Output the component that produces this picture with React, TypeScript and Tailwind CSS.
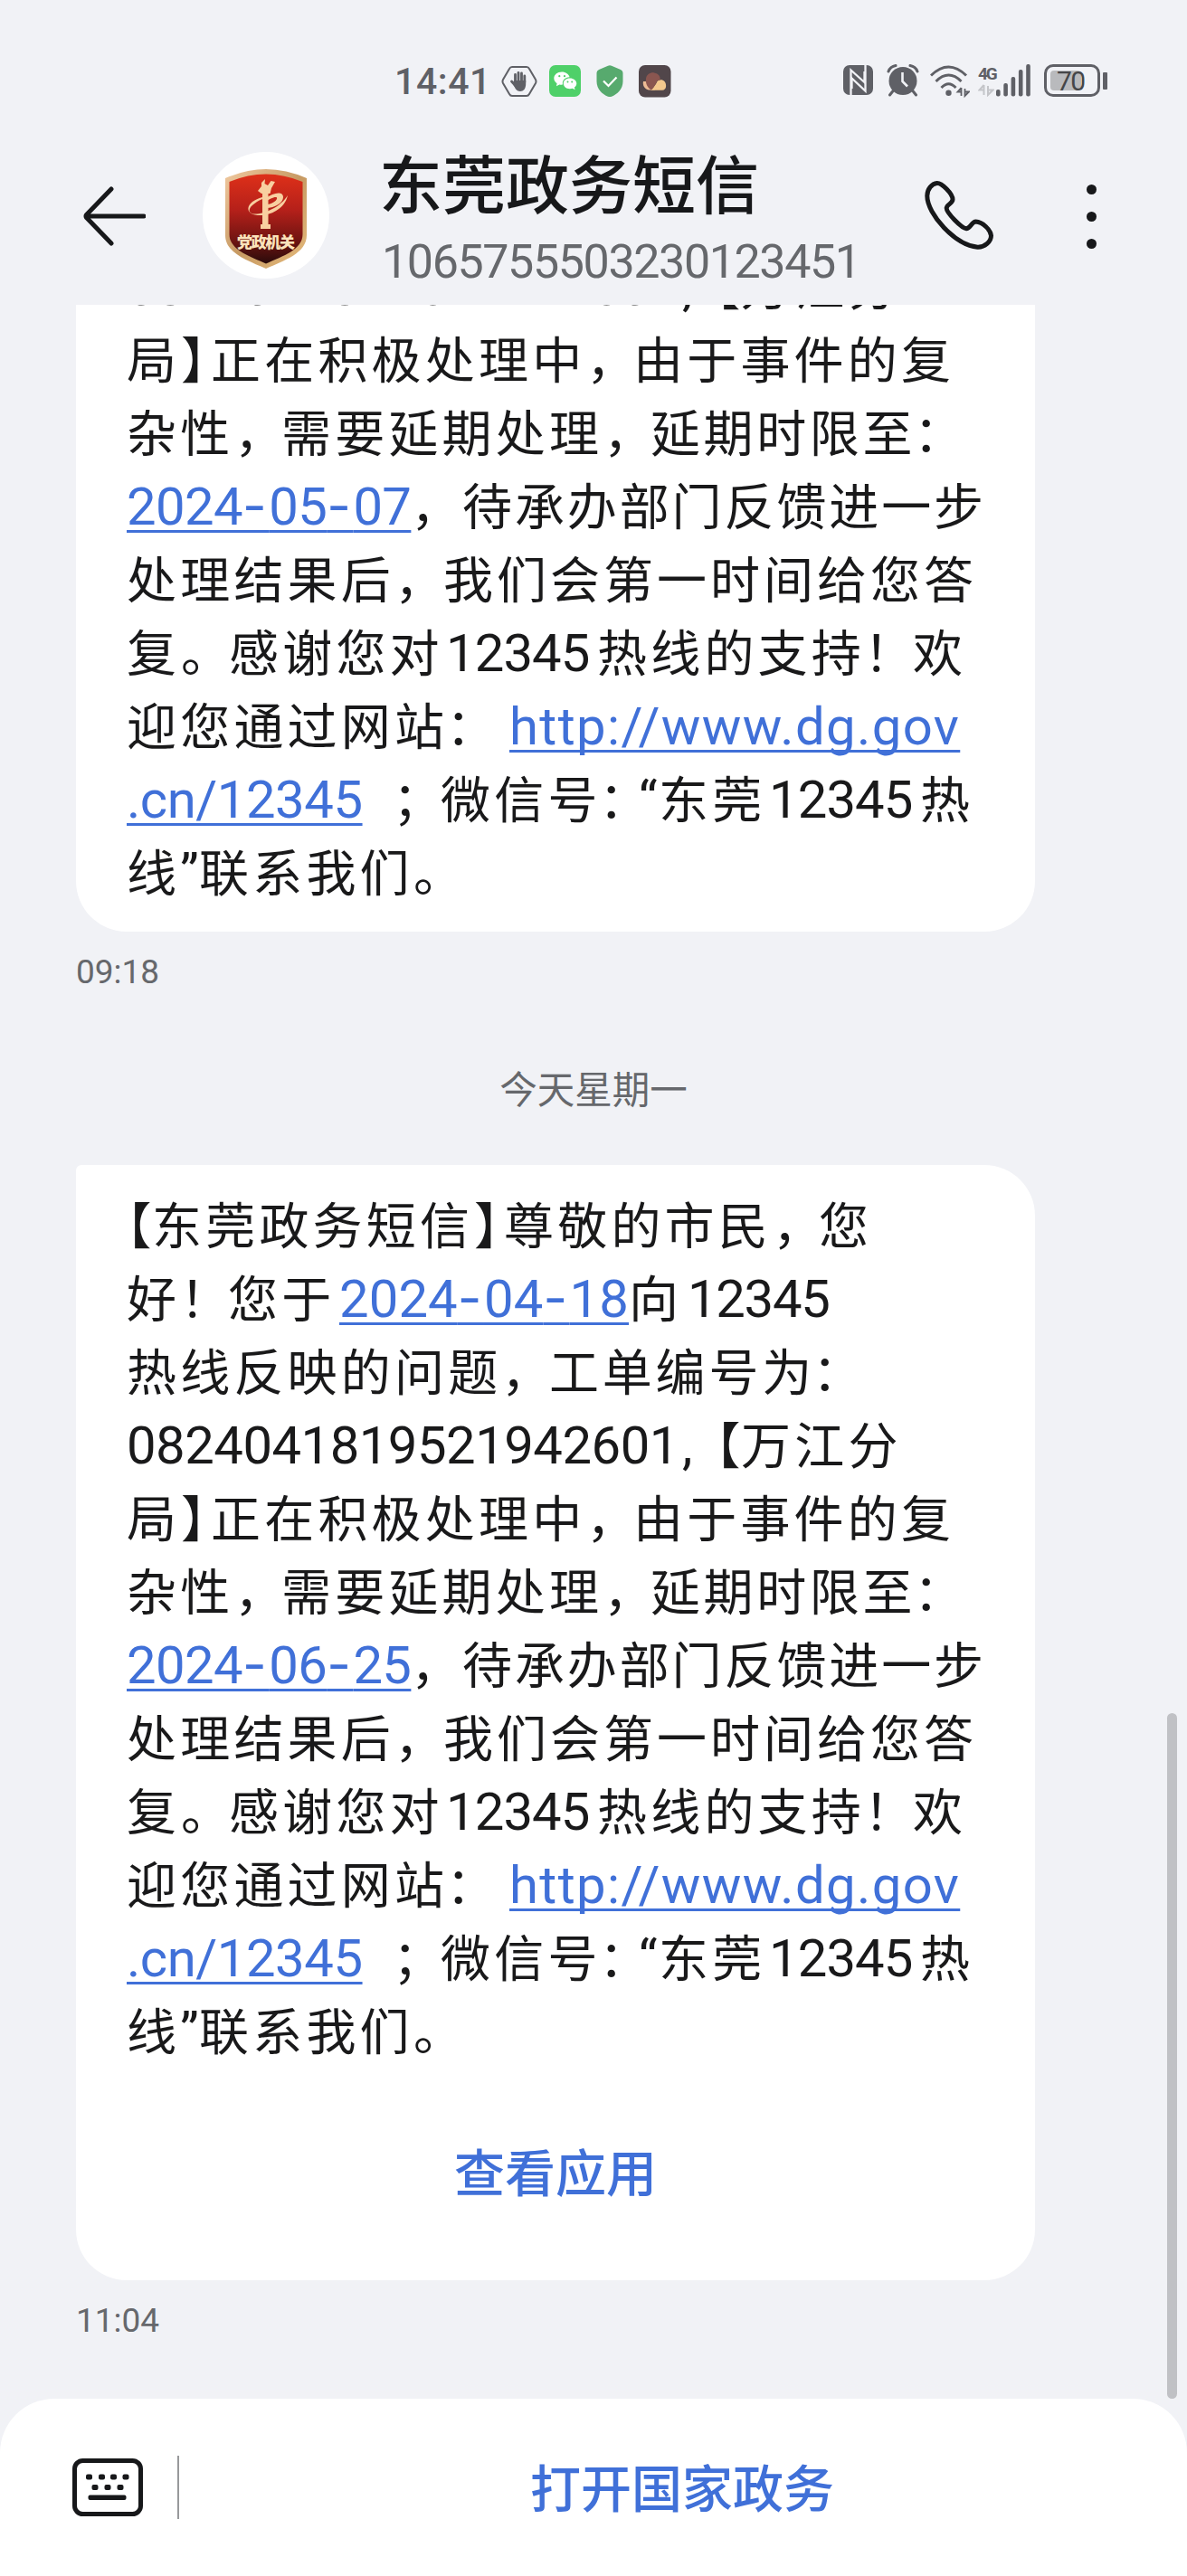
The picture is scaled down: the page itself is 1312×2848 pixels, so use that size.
import { Fragment } from 'react';

type Run = [text: string, className: string];

const NUM = "font-['Roboto','Noto_Sans_CJK_SC',sans-serif] text-[58px]";
const DIGITS = `${NUM} tracking-[-0.9px]`;
const LINK = `${NUM} text-[#4070d8] underline decoration-[2.5px] underline-offset-[6px] [text-decoration-skip-ink:none]`;
const BRACKET = "[font-feature-settings:'halt']";
const PUNCT = 'tracking-[-3px]';

const closingLines = (date: string): Run[][] => [
  [
    ['局', 'w-[60px]'],
    ['】', `w-[33px] ${BRACKET}`],
    ['正在积极处理中', 'w-[415px]'],
    ['，', `w-[52px] ${PUNCT}`],
    ['由于事件的复', ''],
  ],
  [
    ['杂性', 'w-[119px]'],
    ['，', `w-[52px] ${PUNCT}`],
    ['需要延期处理', 'w-[356px]'],
    ['，', `w-[52px] ${PUNCT}`],
    ['延期时限至', 'w-[291px] tracking-[3.6px]'],
    ['：', ''],
  ],
  [
    [date, `w-[314px] tracking-[-0.6px] ${LINK}`],
    ['，', `w-[57px] ${PUNCT}`],
    ['待承办部门反馈进一步', 'tracking-[2.9px]'],
  ],
  [
    ['处理结果后', 'w-[296px]'],
    ['，', `w-[54px] ${PUNCT}`],
    ['我们会第一时间给您答', 'tracking-[4px]'],
  ],
  [
    ['复', 'w-[60px]'],
    ['。', `w-[53px] ${PUNCT}`],
    ['感谢您对', 'w-[240px]'],
    ['12345', `w-[167px] ${DIGITS}`],
    ['热线的支持', 'w-[295px]'],
    ['！', `w-[54px] ${PUNCT}`],
    ['欢', ''],
  ],
  [
    ['迎您通过网站', 'w-[353px]'],
    ['：', 'w-[70px]'],
    ['http://www.dg.gov', `tracking-[1.4px] ${LINK}`],
  ],
  [
    ['.cn/12345', `w-[294px] tracking-[-0.45px] ${LINK}`],
    ['；', `w-[53px] ${PUNCT}`],
    ['微信号', 'w-[175px]'],
    ['：', 'w-[44px] tracking-[-12px]'],
    ['“', `w-[22px] ${DIGITS}`],
    ['东莞', 'w-[122px]'],
    ['12345', `w-[167px] ${DIGITS}`],
    ['热', ''],
  ],
  [
    ['线', 'w-[59px]'],
    ['”', `w-[21px] ${DIGITS}`],
    ['联系我们', 'w-[237px]'],
    ['。', ''],
  ],
];

const ORDER_LINE: Run[] = [
  ['0824041819521942601', `w-[608px] tracking-[-0.5px] ${NUM}`],
  [',', `w-[43px] pl-1.5 ${DIGITS}`],
  ['【', `w-[28px] ${BRACKET}`],
  ['万江分', ''],
];

const OPENING_LINES: Run[][] = [
  [
    ['【', `w-[28px] ${BRACKET}`],
    ['东莞政务短信', 'w-[356px]'],
    ['】', `w-[33px] ${BRACKET}`],
    ['尊敬的市民', 'w-[297px]'],
    ['，', `w-[51px] ${PUNCT}`],
    ['您', ''],
  ],
  [
    ['好', 'w-[59px]'],
    ['！', `w-[53px] ${PUNCT}`],
    ['您于', 'w-[123px]'],
    ['2024-04-18', `w-[320px] tracking-[0.1px] ${LINK}`],
    ['向', 'w-[65px]'],
    ['12345', `tracking-[-1.3px] ${NUM}`],
  ],
  [
    ['热线反映的问题', 'w-[414px]'],
    ['，', `w-[53px] ${PUNCT}`],
    ['工单编号为', 'w-[291px] tracking-[3.8px]'],
    ['：', ''],
  ],
  ORDER_LINE,
];

// Roboto's hyphen is too short for dates, so take that one glyph from Inter
function RunText({ text }: { text: string }) {
  return text.split('-').map((part, i) => (
    <Fragment key={i}>
      {i > 0 && <span className="font-['Inter',sans-serif] tracking-[2.5px]">-</span>}
      {part}
    </Fragment>
  ));
}

function MessageText({ lines }: { lines: Run[][] }) {
  return (
    <div className="text-[55px] tracking-[4.2px] text-[#19191a]">
      {lines.map((runs, i) => (
        <p key={i} className="flex h-[81px] items-baseline leading-[81px] whitespace-nowrap">
          {runs.map(([text, className], j) => (
            <span key={j} className={`shrink-0 ${className}`}>
              <RunText text={text} />
            </span>
          ))}
        </p>
      ))}
    </div>
  );
}

function StatusBar() {
  return (
    <div className="flex h-[148px] items-start pt-[71px] pr-[88px] pl-[436px] text-[#5f6066]">
      <span className="w-[118px] font-['Roboto',sans-serif] text-[41px] leading-[38px] font-medium tracking-[0.6px] whitespace-nowrap">
        14:41
      </span>
      <svg className="h-[38px] w-[40px]" viewBox="0 0 40 38" fill="none">
        <path
          d="M12 3H28Q30 3 31 5L38 17Q39 19 38 21L31 33Q30 35 28 35H12Q10 35 9 33L2 21Q1 19 2 17L9 5Q10 3 12 3Z"
          stroke="currentColor"
          strokeWidth="2"
        />
        <g stroke="currentColor" strokeWidth="2.8" strokeLinecap="round">
          <path d="M15.5 20V11.5M19 19V9.5M22.5 19V10M25.8 20V13M16 24L11.5 19" />
        </g>
        <path d="M14 18H27.2V22C27.2 27 24.5 30 21 30C17 30 15.5 27 13 22Z" fill="currentColor" />
      </svg>
      <svg className="ml-[13px] h-[38px] w-[36px]" viewBox="0 0 36 38">
        <rect y="1" width="35" height="35" rx="7" fill="#4fd069" />
        <path d="M14 8.5C9 8.5 5.3 11.7 5.3 15.6C5.3 18 6.6 20 8.6 21.3L8 24.3L11.4 22.4C13 22.8 14 22.7 15 22.6C14 18 17.5 14.4 22.6 14.3C21.7 11 18.3 8.5 14 8.5Z" fill="#fff" />
        <path d="M22.8 15.5C18.7 15.5 15.8 18.2 15.8 21.3C15.8 24.5 18.7 27.2 22.8 27.2C24 27.2 25 27 25.8 26.7L28.6 28.2L27.9 25.6C29.4 24.5 30.3 23 30.3 21.3C30.3 18.2 27 15.5 22.8 15.5Z" fill="#fff" />
        <g fill="#4fd069">
          <circle cx="11.3" cy="13.2" r="1.1" />
          <circle cx="17" cy="13.2" r="1.1" />
          <circle cx="20.5" cy="19.5" r="1" />
          <circle cx="25.2" cy="19.5" r="1" />
        </g>
      </svg>
      <svg className="ml-[15px] h-[38px] w-[32px]" viewBox="0 0 32 38">
        <path d="M14 1.7Q16 .8 18 1.7L28 6Q30.5 7 30.5 9.5V19C30.5 27.5 24 33.5 18 35.7Q16 36.4 14 35.7C8 33.5 1.5 27.5 1.5 19V9.5Q1.5 7 4 6Z" fill="#57aa6e" />
        <path d="M9 18.5L14.5 24L23.5 14.5" stroke="#fff" strokeWidth="2.2" fill="none" />
      </svg>
      <svg className="ml-[16px] h-[38px] w-[36px]" viewBox="0 0 36 38">
        <rect y="1" width="35.5" height="35.5" rx="7" fill="#51464a" />
        <path d="M5 19C4 23 6.5 28 11 28.5H18L8 19Z" fill="#edbc95" />
        <path d="M13 28.7C16 27 17 24 19.5 21C20 17.5 25.5 15.5 28.5 19C31 22 31 28.7 26 28.7Z" fill="#f4c98e" />
        <path d="M8 16C8.5 11.5 12.5 9 17 9.4C22 10 24.5 14 23.4 17.5C20 17.8 19.5 20 18.5 22.5C16.5 25.5 15.5 27.5 14 28.5C9.5 26 7.3 21 8 16Z" fill="#8a5650" />
      </svg>

      <svg className="ml-auto h-[38px] w-[34px]" viewBox="0 0 34 38">
        <rect y="1" width="33" height="33" rx="7" fill="currentColor" />
        <path d="M8.5 34V6.5L23.5 20V8" fill="none" stroke="#f1f2f6" strokeWidth="2.3" />
        <path d="M24.5 1V29.5L9.5 15.5V27" fill="none" stroke="#f1f2f6" strokeWidth="2.3" />
        <path d="M10.2 10.5L22.8 22V26L10.2 14.2Z" fill="currentColor" />
      </svg>
      <svg className="ml-[14px] h-[38px] w-[36px]" viewBox="0 0 36 38" fill="none">
        <circle cx="18" cy="18.5" r="15.5" fill="currentColor" />
        <path d="M2 8Q4 2.5 10 1.5M34 8Q32 2.5 26 1.5M7.5 29L3.5 34M28.5 29L32.5 34" stroke="currentColor" strokeWidth="3" strokeLinecap="round" />
        <path d="M17.5 9V19L23 24.5" stroke="#f1f2f6" strokeWidth="2.6" />
      </svg>
      <svg className="ml-[12px] h-[38px] w-[44px]" viewBox="0 0 44 38" fill="none">
        <g stroke="currentColor" strokeWidth="3">
          <path d="M1 12.5Q20.5-6.5 40 12.5" />
          <path d="M6.5 19Q20.5 5 34.5 19" />
          <path d="M12.5 26Q20.5 17.5 28.5 26" />
        </g>
        <circle cx="20.5" cy="31.8" r="3.2" fill="currentColor" />
        <path d="M34.5 26V35M34.5 26L30.5 30.5H34.5M38.5 27V35L43 30.5H38.5" stroke="currentColor" strokeWidth="1.8" />
      </svg>
      <div className="ml-[9px] flex w-[60px] items-end">
        <div className="flex w-[20px] flex-col">
          <span className="font-['Roboto',sans-serif] text-[19px] leading-[19px] font-bold tracking-[-2.2px]">4G</span>
          <svg className="h-[16px] w-[18px]" viewBox="0 0 18 16" fill="none" stroke="#c4c5c9" strokeWidth="2">
            <path d="M6.5 3V14M6.5 3L1.5 8.5H6.5M11 4V14L16.5 8.5H11" />
          </svg>
        </div>
        <svg className="h-[36px] w-[40px]" viewBox="0 0 40 36" fill="currentColor">
          <rect x="0" y="28" width="4.6" height="7.5" rx="2" />
          <rect x="8.3" y="21" width="4.6" height="14.5" rx="2" />
          <rect x="16.6" y="14" width="4.6" height="21.5" rx="2" />
          <rect x="24.9" y="6" width="4.6" height="29.5" rx="2" />
          <rect x="33.2" y="0" width="4.6" height="35.5" rx="2" />
        </svg>
      </div>
      <div className="ml-[13px] flex items-center">
        <div className="h-[36px] w-[62px] rounded-[10px] border-[3px] border-current p-[4px]">
          <div className="h-[22px] w-[34px] rounded-[4px] bg-[#b9babd] pl-[7px] font-['Roboto',sans-serif] text-[30px] leading-[23px] tracking-[-1.5px] text-[#454649]">
            70
          </div>
        </div>
        <div className="ml-[3px] h-[19px] w-[5px] rounded-[1px] bg-current" />
      </div>
    </div>
  );
}

function Emblem() {
  return (
    <div className="ml-[63px] flex size-[140px] items-center justify-center rounded-full bg-white">
      <svg className="mt-[8px] h-[112px] w-[92px]" viewBox="0 0 92 112">
        <defs>
          <linearGradient id="crest" x1="0" y1="0" x2="0" y2="1">
            <stop offset="0" stopColor="#de3019" />
            <stop offset=".4" stopColor="#b5201a" />
            <stop offset=".72" stopColor="#741512" />
            <stop offset="1" stopColor="#2a0b0b" />
          </linearGradient>
          <linearGradient id="rim" x1="0" y1="0" x2="1" y2="1">
            <stop offset="0" stopColor="#f0c9a0" />
            <stop offset=".5" stopColor="#c79a63" />
            <stop offset="1" stopColor="#e6bb7c" />
          </linearGradient>
        </defs>
        <path d="M1 11Q24 1 46 1T91 11V74C91 94 66 102 46 111C26 102 1 94 1 74Z" fill="url(#rim)" />
        <path d="M5.5 15Q26 6.5 46 6.5T86.5 15V73C86.5 90 65 97 46 105.5C27 97 5.5 90 5.5 73Z" fill="url(#crest)" />
        <g fill="#f8cfa0">
          <path d="M42 27H48.5V62H51V67H40V62H42Z" />
          <path d="M37 25L41 20L41 16L45 12L44.5 17L48 19L51.5 14L56 15L52 22L50.5 28H41Z" />
          <path d="M46 33C54 27 65 25 65 32C65 38 56 44 46 44L48 40C54 39 59 35 58 32.5C56 31 50 34 46 37Z" />
          <path d="M42 34C33 38 26 44 28 48C31 55 60 47 70 30C66 48 45 54 34 51.5C22 49 24 37 42 32Z" />
        </g>
        <text
          x="46"
          y="88"
          textAnchor="middle"
          textLength="64"
          fontSize="17"
          fontWeight="900"
          fill="#fbe3bb"
          fontFamily="'Noto Sans CJK SC', sans-serif"
        >
          党政机关
        </text>
      </svg>
    </div>
  );
}

function Header() {
  return (
    <header className="flex h-[189px] items-start pt-[20px] text-[#17181a]">
      <svg className="mt-[37px] ml-[91px] h-[68px] w-[70px]" viewBox="0 0 70 68" fill="none" stroke="currentColor" strokeWidth="5" strokeLinecap="round" strokeLinejoin="round">
        <path d="M68 34H5M32 4L4.5 32.5Q3.500 34 4.5 35.5L32 64" />
      </svg>
      <Emblem />
      <div className="ml-[58px] w-[598px]">
        <h1 className="-ml-[3px] h-[90px] text-[70px] leading-[65px] font-medium whitespace-nowrap">东莞政务短信</h1>
        <p className="font-['Roboto',sans-serif] text-[52px] leading-[64px] tracking-[-1.4px] text-[#66686c]">
          1065755503230123451
        </p>
      </div>
      <svg className="mt-[31px] h-[78px] w-[80px]" viewBox="0 0 80 78" fill="none" stroke="currentColor" strokeWidth="5">
        <path d="M15.7 3.5C10 4 4.8 10 4.8 17.5C4.8 38 36 72 60.5 74.3C68.5 74.6 75.5 68 75.5 61.5C75 55 66 46.5 58.5 46C54 46 53 53 48.4 53.7C43 53.7 26 36 26.2 31C26.5 27 33 26 33 21.5C33 15 21 3.2 15.7 3.5Z" />
      </svg>
      <div className="mt-[36px] ml-[101px] flex flex-col gap-[19px]">
        <span className="size-[11px] rounded-full bg-current" />
        <span className="size-[11px] rounded-full bg-current" />
        <span className="size-[11px] rounded-full bg-current" />
      </div>
    </header>
  );
}

function Timestamp({ children }: { children: string }) {
  return (
    <time className="block font-['Roboto',sans-serif] text-[37px] leading-[44px] text-[#66686c]">
      {children}
    </time>
  );
}

function KeyboardIcon() {
  return (
    <svg className="h-[64px] w-[78px]" viewBox="0 0 78 64" fill="#17181a">
      <rect x="2.5" y="2.5" width="73" height="59" rx="9" fill="none" stroke="#17181a" strokeWidth="5" />
      <rect x="15" y="17.5" width="7" height="6" rx="2" />
      <rect x="29" y="17.5" width="7" height="6" rx="2" />
      <rect x="42" y="17.5" width="7" height="6" rx="2" />
      <rect x="55.5" y="17.5" width="7" height="6" rx="2" />
      <rect x="21.5" y="29" width="7" height="6" rx="2" />
      <rect x="35.5" y="29" width="7" height="6" rx="2" />
      <rect x="49.5" y="29" width="7" height="6" rx="2" />
      <rect x="17.5" y="40.5" width="42" height="5.5" rx="2" />
    </svg>
  );
}

export default function App() {
  return (
    <div className="relative flex h-[2848px] w-[1312px] flex-col overflow-hidden bg-[#f1f2f6] font-['Noto_Sans_CJK_SC',sans-serif]">
      <StatusBar />
      <Header />

      <main className="h-[2315px] px-[84px]">
        <section className="flex h-[693px] w-[1060px] flex-col justify-end overflow-hidden rounded-b-[56px] bg-white pb-[28px] pl-[56px]">
          <MessageText lines={[ORDER_LINE, ...closingLines('2024-05-07')]} />
        </section>
        <div className="mt-[23px]">
          <Timestamp>09:18</Timestamp>
        </div>

        <p className="mt-[75px] text-center text-[41.5px] leading-[60px] text-[#66686c]">今天星期一</p>

        <section className="mt-[56px] h-[1233px] w-[1060px] rounded-[56px] rounded-tl-[6px] bg-white pt-[23px] pl-[56px]">
          <MessageText lines={[...OPENING_LINES, ...closingLines('2024-06-25')]} />
          <button className="mt-[76px] block w-[948px] text-center text-[56px] leading-[80px] font-medium text-[#4070d8]">
            查看应用
          </button>
        </section>
        <div className="mt-[23px]">
          <Timestamp>11:04</Timestamp>
        </div>
      </main>

      <footer className="flex h-[196px] items-start rounded-t-[60px] bg-white pt-[63px] pl-[80px]">
        <div className="mt-[3px]">
          <KeyboardIcon />
        </div>
        <div className="ml-[38px] h-[70px] w-[2px] bg-[#98999b]" />
        <button className="ml-[388px] text-[56px] leading-[66px] font-medium whitespace-nowrap text-[#4070d8]">
          打开国家政务
        </button>
      </footer>

      <div className="absolute top-[1894px] left-[1290px] h-[758px] w-[11px] rounded-full bg-[#c0c1c5]" />
    </div>
  );
}
